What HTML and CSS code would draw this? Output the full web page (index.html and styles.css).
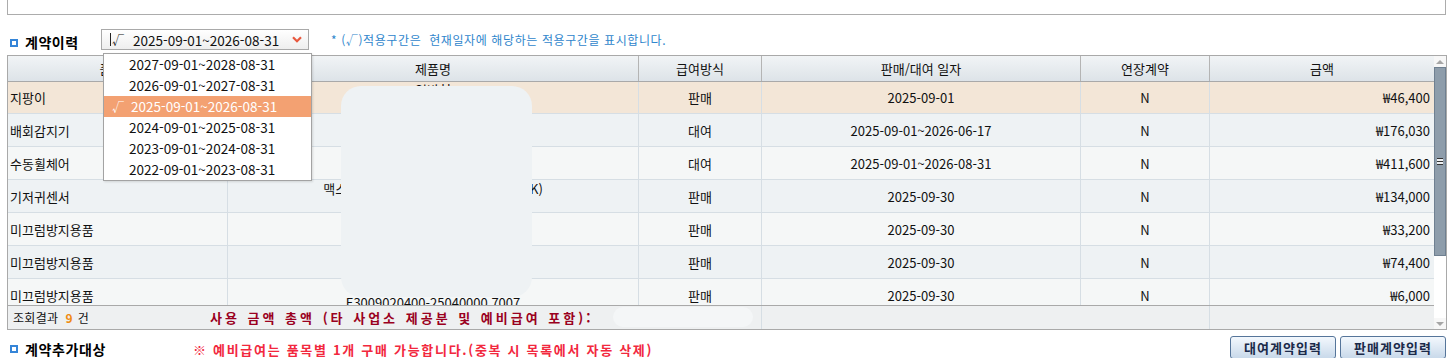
FILE: index.html
```html
<!DOCTYPE html>
<html lang="ko">
<head>
<meta charset="utf-8">
<title>계약이력</title>
<link rel="stylesheet" href="styles.css">
</head>
<body>
<div class="page">
  <div class="topbox"></div>

  <div class="sec-head">
    <span class="sq"></span>
    <span class="sec-title">계약이력</span>
    <div class="select">
      <div class="sel-box">
        <span class="caret"></span><span class="chk">√</span><span class="sel-date">2025-09-01~2026-08-31</span>
        <svg class="chev" width="10" height="7" viewBox="0 0 10 7"><path d="M1 1.2 L5 5.2 L9 1.2" fill="none" stroke="#e8583e" stroke-width="2.2"/></svg>
      </div>
      <ul class="sel-list">
        <li>2027-09-01~2028-08-31</li>
        <li>2026-09-01~2027-08-31</li>
        <li class="on"><span class="li-chk">√</span>2025-09-01~2026-08-31</li>
        <li>2024-09-01~2025-08-31</li>
        <li>2023-09-01~2024-08-31</li>
        <li>2022-09-01~2023-08-31</li>
      </ul>
    </div>
    <span class="note">* (√)적용구간은&nbsp; 현재일자에 해당하는 적용구간을 표시합니다.</span>
  </div>

  <div class="grid">
    <div class="main">
      <div class="row head">
        <div class="c">품목명</div>
        <div class="c">제품명</div>
        <div class="c">급여방식</div>
        <div class="c">판매/대여 일자</div>
        <div class="c">연장계약</div>
        <div class="c">금액</div>
      </div>
      <div class="body">
        <div class="row r sel">
          <div class="c l">지팡이</div>
          <div class="c up">일반형</div>
          <div class="c">판매</div>
          <div class="c">2025-09-01</div>
          <div class="c">N</div>
          <div class="c rt">₩46,400</div>
        </div>
        <div class="row r odd">
          <div class="c l">배회감지기</div>
          <div class="c"></div>
          <div class="c">대여</div>
          <div class="c">2025-09-01~2026-06-17</div>
          <div class="c">N</div>
          <div class="c rt">₩176,030</div>
        </div>
        <div class="row r even">
          <div class="c l">수동휠체어</div>
          <div class="c"></div>
          <div class="c">대여</div>
          <div class="c">2025-09-01~2026-08-31</div>
          <div class="c">N</div>
          <div class="c rt">₩411,600</div>
        </div>
        <div class="row r odd">
          <div class="c l">기저귀센서</div>
          <div class="c up">맥스케어 기저귀센서 세트 (SMC-2000K)</div>
          <div class="c">판매</div>
          <div class="c">2025-09-30</div>
          <div class="c">N</div>
          <div class="c rt">₩134,000</div>
        </div>
        <div class="row r even">
          <div class="c l">미끄럼방지용품</div>
          <div class="c"></div>
          <div class="c">판매</div>
          <div class="c">2025-09-30</div>
          <div class="c">N</div>
          <div class="c rt">₩33,200</div>
        </div>
        <div class="row r odd">
          <div class="c l">미끄럼방지용품</div>
          <div class="c"></div>
          <div class="c">판매</div>
          <div class="c">2025-09-30</div>
          <div class="c">N</div>
          <div class="c rt">₩74,400</div>
        </div>
        <div class="row r even">
          <div class="c l">미끄럼방지용품</div>
          <div class="c down">E3009020400-25040000 7007</div>
          <div class="c">판매</div>
          <div class="c">2025-09-30</div>
          <div class="c">N</div>
          <div class="c rt">₩6,000</div>
        </div>
      </div>
      <div class="foot">
        <div class="f1">
          <span class="cnt">조회결과<b>9</b>건</span>
          <span class="total">사용 금액 총액 (타 사업소 제공분 및 예비급여 포함):</span>
        </div>
        <div class="f2"></div>
        <div class="f3"></div>
      </div>
      <div class="mask"></div>
      <div class="mask2"></div>
    </div>
    <div class="vscroll">
      <div class="sb-btn"><span class="tri up"></span></div>
      <div class="sb-thumb"><span class="grip"></span></div>
      <div class="sb-track"></div>
      <div class="sb-btn"><span class="tri down"></span></div>
    </div>
  </div>

  <div class="sec-bottom">
    <span class="sq"></span>
    <span class="sec-title wide">계약추가대상</span>
    <span class="warn">※ 예비급여는 품목별 1개 구매 가능합니다.(중복 시 목록에서 자동 삭제)</span>
    <div class="btns">
      <button class="btn">대여계약입력</button>
      <button class="btn">판매계약입력</button>
    </div>
  </div>
</div>
</body>
</html>
```

FILE: styles.css
```css
* { box-sizing: border-box; }
html, body { margin: 0; padding: 0; background: #fff; }
body {
  font-family: "Noto Sans CJK KR", "Noto Sans", sans-serif;
  font-size: 13px;
  color: #111;
  overflow: hidden;
}
.page { padding: 0 6px 0 7px; width: 1452px; }

.topbox {
  height: 15px;
  border: 1px solid #acacac;
  border-top: none;
}

/* section header */
.sec-head {
  display: flex;
  align-items: center;
  height: 21px;
  margin-top: 14px;
  margin-bottom: 5px;
}
.sq {
  width: 8px;
  height: 8px;
  border: 2px solid #3585d8;
  background: #fff;
  margin-left: 3px;
  margin-top: 6px;
  flex: none;
}
.sec-title {
  font-weight: 700;
  font-size: 14px;
  letter-spacing: 0.5px;
  margin-left: 7px;
  width: 76px;
  margin-top: 5px;
  color: #000;
  flex: none;
}
.sec-title.wide { width: 168px; letter-spacing: 0.6px; }

.select { position: relative; width: 208px; height: 21px; flex: none; }
.sel-box {
  height: 21px;
  border: 1px solid #a9a9a9;
  background: linear-gradient(#ffffff, #eeeeee);
  display: flex;
  align-items: center;
  padding-left: 8px;
  font-size: 13.5px;
}
.caret { width: 1px; height: 13px; background: #222; margin-right: 1px; }
.chk { width: 21px; font-size: 12px; }
.sel-date { flex: 1; }
.chev { margin-right: 6px; }

.sel-list {
  position: absolute;
  left: 2px;
  top: 24px;
  width: 209px;
  margin: 0;
  padding: 0;
  list-style: none;
  background: #fff;
  border: 1px solid #a3a3a3;
  box-shadow: 1px 1px 2px rgba(0,0,0,0.12);
  z-index: 10;
}
.sel-list li {
  height: 21px;
  line-height: 21px;
  padding-left: 25px;
  font-size: 13.5px;
  color: #111;
  position: relative;
}
.sel-list li.on { background: #f3a172; color: #fff; padding-left: 27px; }
.li-chk { position: absolute; left: 8px; top: 0; font-size: 12px; }

.note {
  margin-left: 22px;
  font-size: 12px;
  letter-spacing: 0.6px;
  color: #2f86cc;
}

/* grid */
.grid {
  display: flex;
  border: 1px solid #a9a9a9;
  height: 275px;
  width: 1440px;
}
.main { position: relative; width: 1426px; display: flex; flex-direction: column; }
.row {
  display: grid;
  grid-template-columns: 220px 411px 123px 319px 129px 224px;
}
.head {
  height: 26px;
  background: linear-gradient(#f1f4f6, #dde3e8);
  border-bottom: 1px solid #a9a9a9;
}
.head .c {
  border-right: 1px solid #b4b4b4;
  display: flex;
  align-items: center;
  justify-content: center;
  color: #111;
}
.head .c:last-child { border-right: none; }

.body { height: 223px; overflow: hidden; }
.r { height: 33px; border-bottom: 1px solid #d6dee4; }
.r.sel { height: 32px; background: #f3e6d7; }
.r.odd { background: #eef2f4; }
.r.even { background: #f5f7f7; }
.r .c {
  border-right: 1px solid #d6dee4;
  display: flex;
  align-items: center;
  justify-content: center;
  overflow: hidden;
  white-space: nowrap;
}
.r .c:last-child { border-right: none; }
.r .c.l { justify-content: flex-start; padding-left: 2px; }
.r .c.rt { justify-content: flex-end; padding-right: 4px; }
.r .c.up { padding-bottom: 16px; }
.r .c.down { padding-top: 15px; }

.foot {
  height: 24px;
  border-top: 1px solid #a9a9a9;
  background: #eef0f1;
  display: grid;
  grid-template-columns: 754px 448px 224px;
}
.f1, .f2 { border-right: 1px solid #d6dee4; }
.f1 { display: flex; align-items: center; padding-left: 5px; }
.cnt { font-size: 12px; width: 197px; letter-spacing: 0.3px; }
.cnt b { color: #f08a10; font-weight: 700; margin: 0 5px 0 7px; }
.total {
  font-weight: 700;
  color: #9a0020;
  font-size: 13px;
  letter-spacing: 3px;
  word-spacing: 1px;
}

.mask {
  position: absolute;
  left: 333px;
  top: 30px;
  width: 191px;
  height: 211px;
  background: #eef2f4;
  border-radius: 20px;
  z-index: 2;
}
.mask2 {
  position: absolute;
  left: 605px;
  top: 251px;
  width: 140px;
  height: 20px;
  background: #f4f6f7;
  border-radius: 10px;
  z-index: 2;
}

/* scrollbar */
.vscroll { width: 12px; display: flex; flex-direction: column; background: #fff; }
.sb-btn { height: 11px; display: flex; align-items: center; justify-content: center; background: #f7f7f7; }
.tri { width: 0; height: 0; border-left: 4px solid transparent; border-right: 4px solid transparent; }
.tri.up { border-bottom: 4px solid #a6a6a6; }
.tri.down { border-top: 4px solid #a6a6a6; }
.sb-thumb {
  height: 189px;
  background: #8e9dab;
  border: 1px solid #6f8091;
  display: flex;
  align-items: center;
  justify-content: center;
}
.grip {
  width: 6px;
  height: 7px;
  background: linear-gradient(#333 0 1px, #eef1f4 1px 3px, #333 3px 4px, #eef1f4 4px 6px, #333 6px 7px);
}
.sb-track { flex: 1; background: #fff; }

/* bottom section */
.sec-bottom {
  display: flex;
  align-items: center;
  height: 22px;
  margin-top: 6px;
}
.sec-bottom .sq { margin-top: 4px; }
.sec-bottom .sec-title { margin-top: 4px; }
.warn {
  color: #f2283e;
  font-weight: 700;
  font-size: 13px;
  letter-spacing: 1.7px;
  margin-top: 4px;
}
.btns { margin-left: auto; display: flex; gap: 4px; }
.btn {
  width: 106px;
  height: 23px;
  font-family: inherit;
  font-size: 13px;
  font-weight: 700;
  letter-spacing: 1px;
  color: #1b2a4a;
  border: 1px solid #56759a;
  border-radius: 3px;
  background: linear-gradient(#f3f8fd, #c9d9ea);
  padding: 0;
}
```
